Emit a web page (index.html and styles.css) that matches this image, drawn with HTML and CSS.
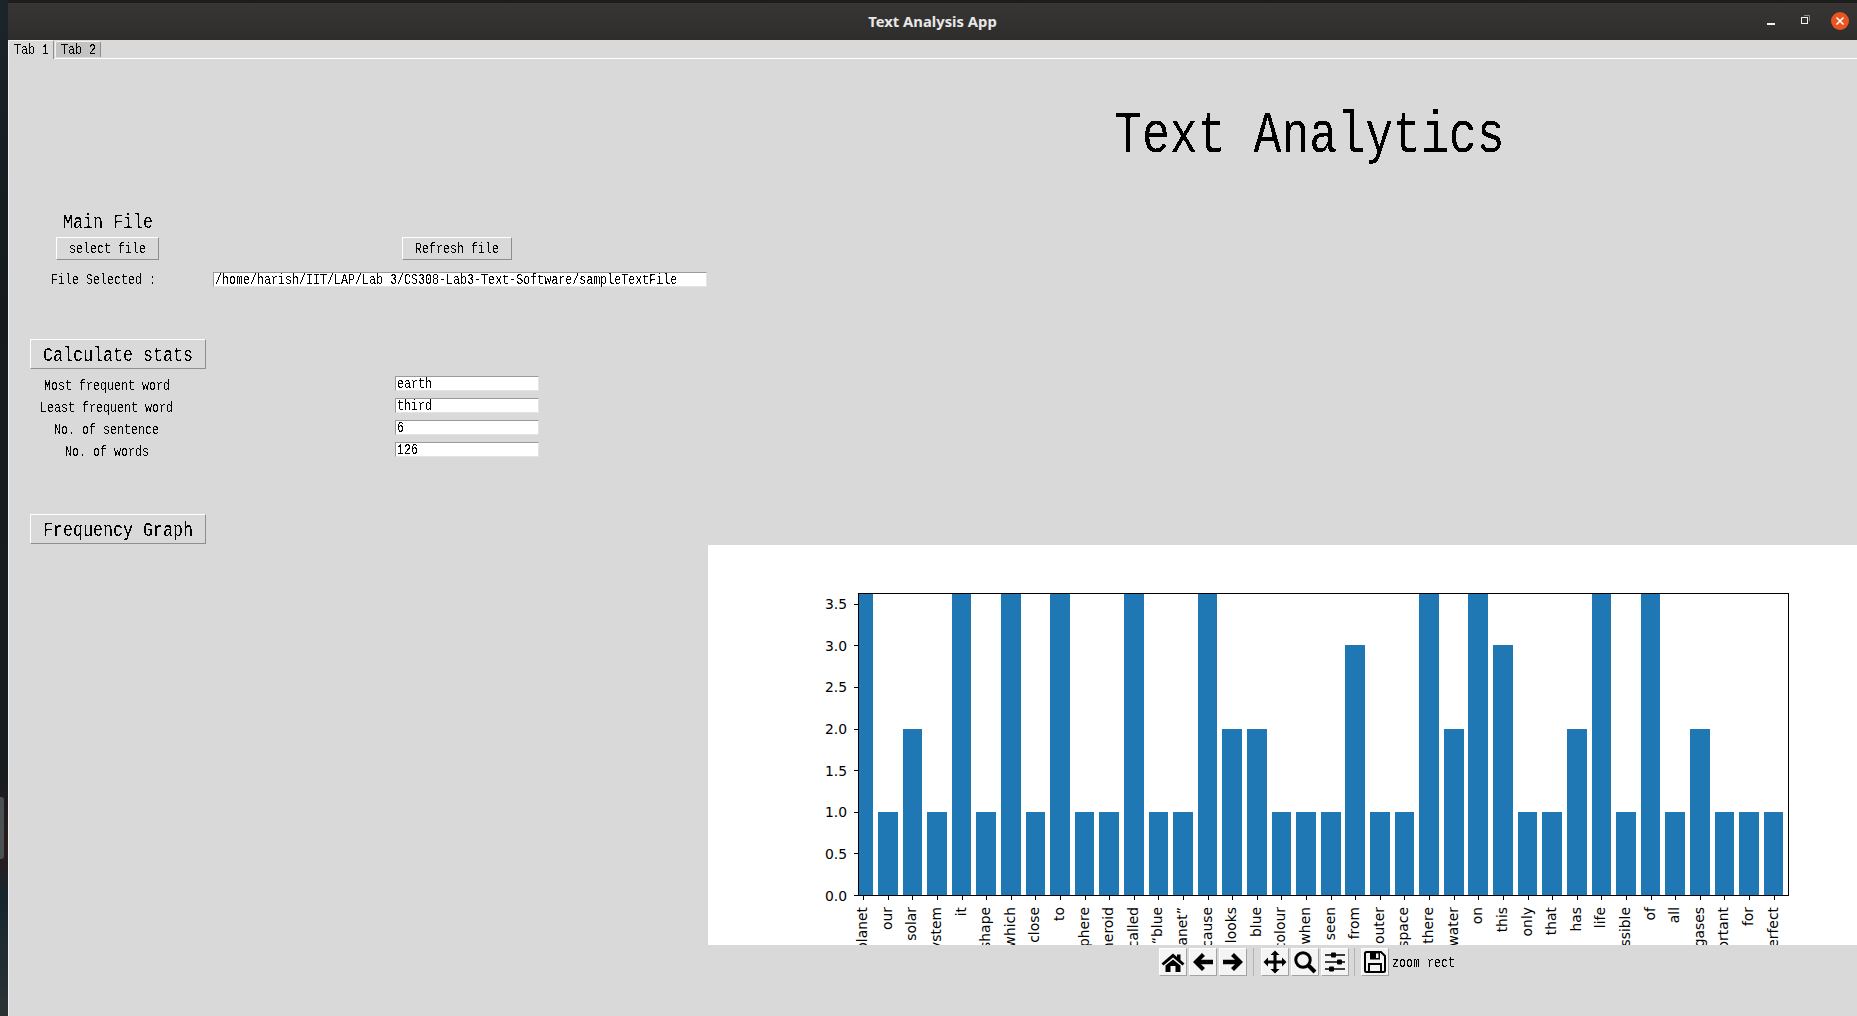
FILE: index.html
```html
<!DOCTYPE html>
<html lang="en">
<head>
<meta charset="utf-8">
<title>Text Analysis App</title>
<link rel="stylesheet" href="styles.css">
</head>
<body>
<svg class="defs" width="0" height="0" aria-hidden="true">
  <filter id="aliased" color-interpolation-filters="sRGB" x="-5%" y="-20%" width="110%" height="140%">
    <feComponentTransfer><feFuncA type="discrete" tableValues="0 1"/></feComponentTransfer>
  </filter>
</svg>
<div class="wallpaper"><div class="dock"></div></div>
<div class="window">
  <header class="titlebar">
    <div class="title-name">Text Analysis App</div>
    <div class="win-controls">
      <svg class="win-min" width="8" height="2" viewBox="0 0 8 2"><rect width="8" height="2" fill="#f2f2f2"/></svg>
      <svg class="win-max" width="9" height="9" viewBox="0 0 9 9"><path d="M3 .5H8.5V6" fill="none" stroke="#8e8e8e"/><rect x=".5" y="2.5" width="6" height="6" fill="#333" stroke="#f2f2f2"/></svg>
      <svg class="win-close" width="18" height="18" viewBox="0 0 18 18"><circle cx="9" cy="9" r="9" fill="#e95420"/><path d="M5.5 5.5L12.5 12.5M12.5 5.5L5.5 12.5" stroke="#fff" stroke-width="1.6"/></svg>
    </div>
  </header>
  <nav class="tabs">
    <div class="tab tab-active"><span class="t">Tab 1</span></div>
    <div class="tab"><span class="t">Tab 2</span></div>
  </nav>
  <main class="panel">
    <section class="left">
      <div class="heading"><span class="t t-md t-left">Main File</span></div>
      <div class="file-buttons">
        <button class="btn btn-select"><span class="t">select file</span></button>
        <button class="btn btn-refresh"><span class="t">Refresh file</span></button>
      </div>
      <div class="file-row">
        <div class="file-label"><span class="t t-left">File Selected :</span></div>
        <div class="entry entry-path"><span class="t t-left">/home/harish/IIT/LAP/Lab 3/CS308-Lab3-Text-Software/sampleTextFile</span></div>
      </div>
      <button class="btn btn-big btn-calc"><span class="t t-md">Calculate stats</span></button>
      <div class="stats">
        <div class="stat-label"><span class="t">Most frequent word</span></div><div></div>
        <div class="entry"><span class="t t-left">earth</span></div>
        <div class="stat-label"><span class="t">Least frequent word</span></div><div></div>
        <div class="entry"><span class="t t-left">third</span></div>
        <div class="stat-label"><span class="t">No. of sentence</span></div><div></div>
        <div class="entry"><span class="t t-left">6</span></div>
        <div class="stat-label"><span class="t">No. of words</span></div><div></div>
        <div class="entry"><span class="t t-left">126</span></div>
      </div>
      <button class="btn btn-big btn-graph"><span class="t t-md">Frequency Graph</span></button>
    </section>
    <section class="right">
      <div class="title-row"><span class="t t-xl t-left">Text Analytics</span></div>
      <svg class="chart" width="1149" height="400" viewBox="708 545 1149 400" role="img" aria-label="Word frequency bar chart">
        <g class="bars" shape-rendering="crispEdges">
          <rect x="858" y="594" width="15" height="301"/>
          <rect x="878" y="812" width="20" height="83"/>
          <rect x="903" y="729" width="19" height="166"/>
          <rect x="927" y="812" width="20" height="83"/>
          <rect x="952" y="594" width="19" height="301"/>
          <rect x="976" y="812" width="20" height="83"/>
          <rect x="1001" y="594" width="20" height="301"/>
          <rect x="1026" y="812" width="19" height="83"/>
          <rect x="1050" y="594" width="20" height="301"/>
          <rect x="1075" y="812" width="19" height="83"/>
          <rect x="1099" y="812" width="20" height="83"/>
          <rect x="1124" y="594" width="20" height="301"/>
          <rect x="1149" y="812" width="19" height="83"/>
          <rect x="1173" y="812" width="20" height="83"/>
          <rect x="1198" y="594" width="19" height="301"/>
          <rect x="1222" y="729" width="20" height="166"/>
          <rect x="1247" y="729" width="20" height="166"/>
          <rect x="1272" y="812" width="19" height="83"/>
          <rect x="1296" y="812" width="20" height="83"/>
          <rect x="1321" y="812" width="20" height="83"/>
          <rect x="1345" y="645" width="20" height="250"/>
          <rect x="1370" y="812" width="20" height="83"/>
          <rect x="1395" y="812" width="19" height="83"/>
          <rect x="1419" y="594" width="20" height="301"/>
          <rect x="1444" y="729" width="20" height="166"/>
          <rect x="1468" y="594" width="20" height="301"/>
          <rect x="1493" y="645" width="20" height="250"/>
          <rect x="1518" y="812" width="19" height="83"/>
          <rect x="1542" y="812" width="20" height="83"/>
          <rect x="1567" y="729" width="20" height="166"/>
          <rect x="1592" y="594" width="19" height="301"/>
          <rect x="1616" y="812" width="20" height="83"/>
          <rect x="1641" y="594" width="19" height="301"/>
          <rect x="1665" y="812" width="20" height="83"/>
          <rect x="1690" y="729" width="20" height="166"/>
          <rect x="1715" y="812" width="19" height="83"/>
          <rect x="1739" y="812" width="20" height="83"/>
          <rect x="1764" y="812" width="19" height="83"/>
        </g>
        <g class="axes" shape-rendering="crispEdges">
          <rect class="spine" x="858.5" y="593.5" width="930" height="302"/>
          <path class="ticks" d="M854 604.5h4M854 645.5h4M854 687.5h4M854 729.5h4M854 770.5h4M854 812.5h4M854 853.5h4M854 895.5h4"/>
          <path class="ticks" d="M863.5 896v3.500M888.500 896v3.500M912.500 896v3.500M937.500 896v3.500M962.500 896v3.500M986.500 896v3.500M1011.500 896v3.500M1035.500 896v3.500M1060.500 896v3.500M1085.500 896v3.500M1109.500 896v3.500M1134.500 896v3.500M1158.500 896v3.500M1183.500 896v3.500M1208.500 896v3.500M1232.500 896v3.500M1257.500 896v3.500M1281.500 896v3.500M1306.500 896v3.500M1331.500 896v3.500M1355.500 896v3.500M1380.500 896v3.500M1404.500 896v3.500M1429.500 896v3.500M1454.500 896v3.500M1478.500 896v3.500M1503.500 896v3.500M1528.500 896v3.500M1552.500 896v3.500M1577.500 896v3.500M1601.500 896v3.500M1626.500 896v3.500M1651.500 896v3.500M1675.500 896v3.500M1700.500 896v3.500M1724.500 896v3.500M1749.500 896v3.500M1774.500 896v3.500"/>
        </g>
        <g class="ylabels">
          <text x="847" y="609">3.5</text>
          <text x="847" y="651">3.0</text>
          <text x="847" y="692">2.5</text>
          <text x="847" y="734">2.0</text>
          <text x="847" y="776">1.5</text>
          <text x="847" y="817">1.0</text>
          <text x="847" y="859">0.5</text>
          <text x="847" y="901">0.0</text>
        </g>
        <g class="xlabels" transform="translate(-1 0)">
          <text transform="translate(868 907) rotate(-90)">planet</text>
          <text transform="translate(893 907) rotate(-90)">our</text>
          <text transform="translate(917 907) rotate(-90)">solar</text>
          <text transform="translate(942 907) rotate(-90)">system</text>
          <text transform="translate(967 907) rotate(-90)">it</text>
          <text transform="translate(991 907) rotate(-90)">shape</text>
          <text transform="translate(1016 907) rotate(-90)">which</text>
          <text transform="translate(1040 907) rotate(-90)">close</text>
          <text transform="translate(1065 907) rotate(-90)">to</text>
          <text transform="translate(1090 907) rotate(-90)">sphere</text>
          <text transform="translate(1114 907) rotate(-90)">spheroid</text>
          <text transform="translate(1139 907) rotate(-90)">called</text>
          <text transform="translate(1163 907) rotate(-90)">“blue</text>
          <text transform="translate(1188 907) rotate(-90)">planet”</text>
          <text transform="translate(1213 907) rotate(-90)">because</text>
          <text transform="translate(1237 907) rotate(-90)">looks</text>
          <text transform="translate(1262 907) rotate(-90)">blue</text>
          <text transform="translate(1286 907) rotate(-90)">colour</text>
          <text transform="translate(1311 907) rotate(-90)">when</text>
          <text transform="translate(1336 907) rotate(-90)">seen</text>
          <text transform="translate(1360 907) rotate(-90)">from</text>
          <text transform="translate(1385 907) rotate(-90)">outer</text>
          <text transform="translate(1409 907) rotate(-90)">space</text>
          <text transform="translate(1434 907) rotate(-90)">there</text>
          <text transform="translate(1459 907) rotate(-90)">water</text>
          <text transform="translate(1483 907) rotate(-90)">on</text>
          <text transform="translate(1508 907) rotate(-90)">this</text>
          <text transform="translate(1533 907) rotate(-90)">only</text>
          <text transform="translate(1557 907) rotate(-90)">that</text>
          <text transform="translate(1582 907) rotate(-90)">has</text>
          <text transform="translate(1606 907) rotate(-90)">life</text>
          <text transform="translate(1631 907) rotate(-90)">possible</text>
          <text transform="translate(1656 907) rotate(-90)">of</text>
          <text transform="translate(1680 907) rotate(-90)">all</text>
          <text transform="translate(1705 907) rotate(-90)">gases</text>
          <text transform="translate(1729 907) rotate(-90)">important</text>
          <text transform="translate(1754 907) rotate(-90)">for</text>
          <text transform="translate(1779 907) rotate(-90)">perfect</text>
        </g>
      </svg>
      <div class="toolbar">
        <div class="tool-group">
          <button class="tool" aria-label="Home"><svg width="24" height="24" viewBox="0 0 24 24"><path d="M12 3.500L.5 13.500L2.500 15.500L12 7.500L21.500 15.500L23.500 13.500L19.500 10V4.500H16V7Z"/><path d="M4.500 15.500L12 9.500L19.500 15.500V22H14.500V16H9.500V22H4.500Z"/></svg></button>
          <button class="tool" aria-label="Back"><svg width="24" height="24" viewBox="0 0 24 24"><path d="M2 12L11 3L14 6L10 9.800H22V14.200H10L14 18L11 21Z"/></svg></button>
          <button class="tool" aria-label="Forward"><svg width="24" height="24" viewBox="0 0 24 24"><path d="M22 12L13 3L10 6L14 9.800H2V14.200H14L10 18L13 21Z"/></svg></button>
        </div>
        <div class="tool-sep"></div>
        <div class="tool-group">
          <button class="tool" aria-label="Pan"><svg width="24" height="24" viewBox="0 0 24 24"><path d="M12 .5L16.500 5H13.500V10.500H19V7.500L23.500 12L19 16.500V13.500H13.500V19H16.500L12 23.500L7.500 19H10.500V13.500H5V16.500L.5 12L5 7.500V10.500H10.500V5H7.500Z"/></svg></button>
          <button class="tool" aria-label="Zoom"><svg class="icon-nudge" width="24" height="24" viewBox="0 0 24 24"><circle cx="10" cy="10" r="7.200" fill="none" stroke="#000" stroke-width="3"/><path d="M15 15L22 22" stroke="#000" stroke-width="4"/></svg></button>
          <button class="tool" aria-label="Configure"><svg class="icon-nudge" width="24" height="24" viewBox="0 0 24 24"><path d="M2 5H22M2 12H22M2 19H22" stroke="#000" stroke-width="1.500"/><rect x="8" y="2.500" width="5" height="5" rx="1"/><rect x="14" y="9.500" width="5" height="5" rx="1"/><rect x="6" y="16.500" width="5" height="5" rx="1"/></svg></button>
        </div>
        <div class="tool-sep tool-sep-2"></div>
        <button class="tool" aria-label="Save"><svg width="24" height="24" viewBox="0 0 24 24"><path d="M2 3.500Q2 2 3.500 2H18L22 6V20.500Q22 22 20.500 22H3.500Q2 22 2 20.500Z" fill="none" stroke="#000" stroke-width="2"/><path d="M7 2H17V9.500H7ZM13 3.500V8H15.500V3.500Z" fill-rule="evenodd"/><rect x="6" y="14" width="12" height="8" fill="none" stroke="#000" stroke-width="2"/></svg></button>
        <div class="tool-msg"><span class="t t-left">zoom rect</span></div>
      </div>
    </section>
  </main>
</div>
</body>
</html>
```

FILE: styles.css
```css
html, body {
  margin: 0;
  height: 1016px;
  overflow: hidden;
}
body {
  display: flex;
  background: #14191c;
}
.defs { position: absolute; }

.wallpaper {
  position: relative;
  flex: 0 0 8px;
  background: linear-gradient(180deg, #1b2429 0%, #141a1e 30%, #161c20 75%, #2a1c1c 84%, #16262e 88%, #2b3335 100%);
}
.dock {
  position: absolute;
  left: 0;
  top: 797px;
  width: 4px;
  height: 62px;
  background: #4b5053;
  border-radius: 0 3px 3px 0;
}

.window {
  flex: 1;
  display: flex;
  flex-direction: column;
  min-width: 0;
}

.titlebar {
  position: relative;
  flex: 0 0 37px;
  border-top: 3px solid #1d1d1d;
  background: linear-gradient(180deg, #383635, #2e2d2c);
  display: flex;
  align-items: center;
  justify-content: center;
}
.title-name {
  font: 700 14.8px/18px "Noto Sans", sans-serif;
  color: #e8e8e8;
  margin-bottom: 2px;
}
.win-controls {
  position: absolute;
  right: 8px;
  top: 9px;
  display: flex;
  align-items: center;
}
.win-min { margin-top: 5px; }
.win-max { margin-left: 26px; margin-top: -3px; }
.win-close { margin-left: 21px; }

.t {
  display: inline-block;
  font: 15px/16px "Liberation Mono", monospace;
  color: #000;
  white-space: nowrap;
  transform: scaleX(0.778);
  filter: url(#aliased);
}
.t-left { transform-origin: left center; }
.t-md {
  position: relative;
  top: 2px;
  font-size: 20px;
  line-height: 22px;
  transform: scaleX(0.833);
}
.t-md.t-left { transform-origin: left center; }
.t-xl {
  font-size: 60px;
  line-height: 60px;
  transform: scaleX(0.775);
}

.tabs {
  flex: 0 0 18px;
  display: flex;
  align-items: flex-start;
  background: #d9d9d9;
  border-bottom: 1px solid #fff;
}
.tab {
  box-sizing: border-box;
  width: 46px;
  height: 16px;
  margin-top: 1px;
  margin-right: 1px;
  padding-top: 2px;
  background: #c3c3c3;
  border-right: 1px solid #8e8e8e;
  border-left: 1px solid #f2f2f2;
  border-top: 1px solid #f2f2f2;
  border-radius: 2px 2px 0 0;
  display: flex;
  align-items: center;
  justify-content: center;
}
.tab-active {
  height: 19px;
  margin-top: 0;
  background: #d9d9d9;
  margin-bottom: -1px;
}

.panel {
  flex: 1;
  display: flex;
  background: #d9d9d9;
  border-left: 1px solid #f0f0f0;
  min-height: 0;
}
.left {
  flex: 0 0 699px;
  display: flex;
  flex-direction: column;
  align-items: flex-start;
}
.right {
  flex: 1;
  min-width: 0;
  display: flex;
  flex-direction: column;
}

.heading {
  margin-top: 151px;
  height: 22px;
  padding-left: 54px;
}
.file-buttons {
  display: flex;
  margin-top: 5px;
  margin-left: 47px;
}
.btn {
  box-sizing: border-box;
  height: 23px;
  padding: 2px 0 0;
  background: #d9d9d9;
  border: 1px solid;
  border-color: #fff #8e8e8e #8e8e8e #fff;
  display: flex;
  align-items: center;
  justify-content: center;
}
.btn-select { width: 103px; }
.btn-refresh { width: 110px; margin-left: 243px; }
.btn-big { width: 176px; height: 30px; margin-left: 21px; padding: 0; }
.btn-calc { margin-top: 52px; }
.btn-graph { margin-top: 57px; }

.file-row {
  display: flex;
  margin-top: 12px;
  height: 15px;
}
.file-label {
  box-sizing: border-box;
  width: 204px;
  padding-left: 42px;
  line-height: 14px;
}
.entry {
  box-sizing: border-box;
  height: 15px;
  padding: 2px 0 0 1px;
  background: #fff;
  border: 1px solid;
  border-color: #9a9a9a #e4e4e4 #e4e4e4 #9a9a9a;
  display: flex;
  align-items: center;
}
.entry-path { width: 494px; }

.stats {
  display: grid;
  grid-template-columns: 196px 190px 144px;
  grid-auto-rows: 15px;
  row-gap: 7px;
  margin-top: 7px;
}
.stat-label {
  line-height: 17px;
  text-align: center;
}

.title-row {
  box-sizing: border-box;
  flex: 0 0 486px;
  padding-top: 47px;
  padding-left: 406px;
}

.chart {
  flex: 0 0 400px;
  display: block;
  background: #fff;
  overflow: hidden;
}
.bars rect { fill: #1f77b4; }
.spine { fill: none; stroke: #000; }
.ticks { fill: none; stroke: #000; stroke-width: 1; }
.ylabels text, .xlabels text {
  font: 13.9px "DejaVu Sans", sans-serif;
  fill: #000;
  text-anchor: end;
}

.toolbar {
  flex: 1;
  display: flex;
  align-items: flex-start;
  padding-top: 3px;
  padding-left: 451px;
}
.tool-group {
  display: flex;
  gap: 2px;
}
.tool {
  box-sizing: border-box;
  width: 28px;
  height: 28px;
  padding: 0;
  background: #f4f4f4;
  border: 1px solid;
  border-color: #fff #a3a3a3 #a3a3a3 #fff;
  display: flex;
  align-items: center;
  justify-content: center;
}
.icon-nudge { margin-left: -1px; }
.tool-sep {
  width: 1px;
  height: 28px;
  margin: 0 7px 0 6px;
  background: #b4b4b4;
}
.tool-sep-2 { margin-left: 5px; margin-right: 6px; }
.tool-msg {
  margin-left: 3px;
  padding-top: 2px;
  height: 28px;
  display: flex;
  align-items: center;
}
```
